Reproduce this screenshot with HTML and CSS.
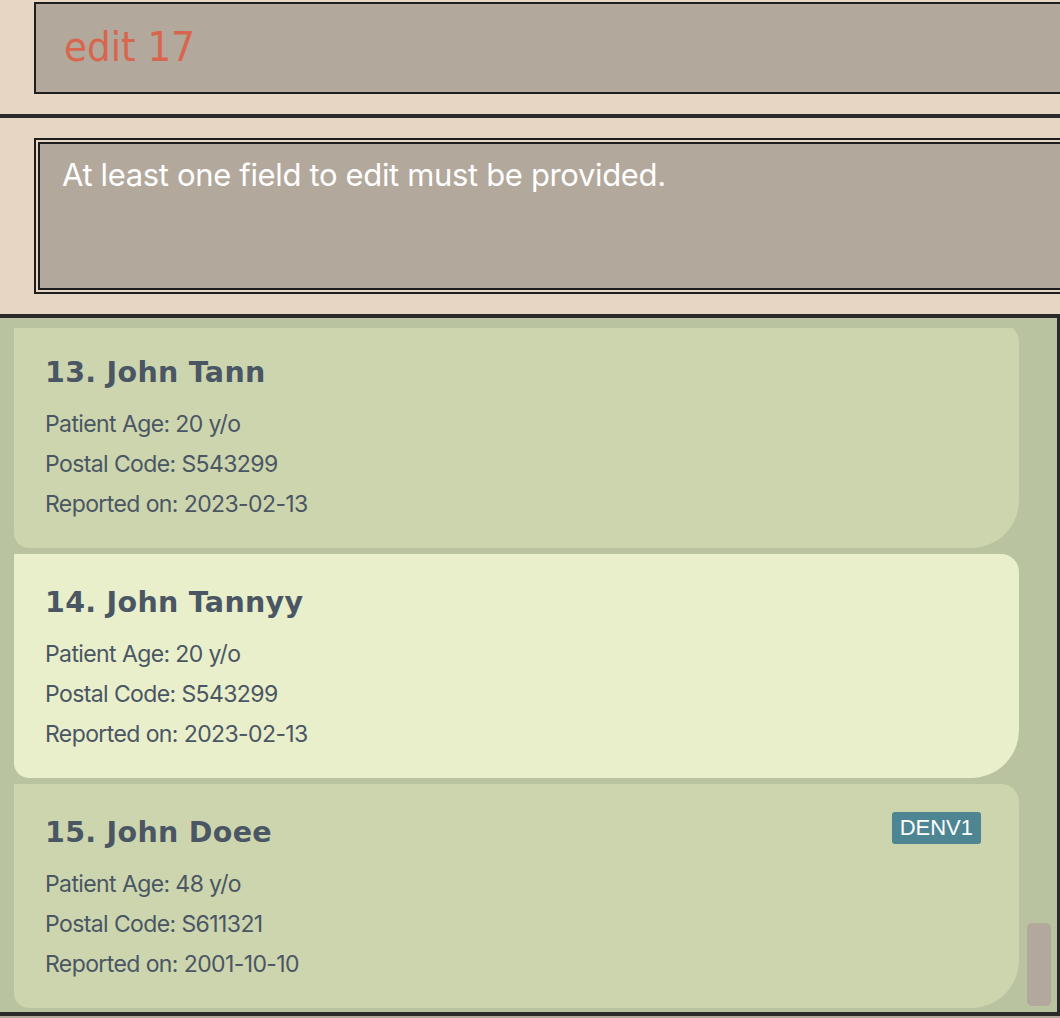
FILE: index.html
```html
<!DOCTYPE html>
<html>
<head>
<meta charset="utf-8">
<link rel="stylesheet" href="styles.css">
</head>
<body>
<div class="app">
  <section class="command-section">
    <div class="command-box">edit 17</div>
  </section>
  <section class="result-section">
    <div class="result-box">At least one field to edit must be provided.</div>
  </section>
  <section class="list-panel">
    <div class="viewport">
      <div class="cards">
        <div class="card">
          <div class="card-head"><span class="name">13. John Tann</span></div>
          <div class="field">Patient Age: 20 y/o</div>
          <div class="field">Postal Code: S543299</div>
          <div class="field">Reported on: 2023-02-13</div>
        </div>
        <div class="card selected">
          <div class="card-head"><span class="name">14. John Tannyy</span></div>
          <div class="field">Patient Age: 20 y/o</div>
          <div class="field">Postal Code: S543299</div>
          <div class="field">Reported on: 2023-02-13</div>
        </div>
        <div class="card">
          <div class="card-head"><span class="name">15. John Doee</span><span class="badge">DENV1</span></div>
          <div class="field">Patient Age: 48 y/o</div>
          <div class="field">Postal Code: S611321</div>
          <div class="field">Reported on: 2001-10-10</div>
        </div>
      </div>
    </div>
    <div class="scroll-track"><div class="scroll-thumb"></div></div>
  </section>
  <footer class="status-bar"></footer>
</div>
</body>
</html>
```

FILE: styles.css
```css
html, body {
  margin: 0;
  padding: 0;
}
body {
  background: #e8d6c5;
  width: 1060px;
  height: 1018px;
  overflow: hidden;
}
.app {
  display: flex;
  flex-direction: column;
  width: 1060px;
}
.command-section {
  padding: 2px 0 20px 34px;
  border-bottom: 4px solid #2a2a2a;
}
.command-box {
  height: 92px;
  margin-right: -20px;
  border: 2px solid #1e1e1e;
  background: #b3a89c;
  color: #d8664f;
  font-family: "DejaVu Sans Condensed", "DejaVu Sans", sans-serif;
  font-size: 41.5px;
  line-height: 48px;
  padding: 19px 0 0 28px;
  box-sizing: border-box;
}
.result-section {
  padding: 20px 0 20px 34px;
}
.result-box {
  height: 156px;
  box-sizing: border-box;
  margin-right: -20px;
  border: 6px double #1e1e1e;
  background: #b3a89c;
  background-clip: padding-box;
  color: #ffffff;
  font-family: Inter, "Noto Sans", sans-serif;
  font-size: 31px;
  line-height: 38px;
  letter-spacing: -0.35px;
  padding: 12px 0 0 22px;
}
.list-panel {
  display: flex;
  background: #bac39f;
  border-top: 4px solid #2a2a2a;
  border-right: 3px solid #2a2a2a;
  border-bottom: 4px solid #2a2a2a;
  padding: 10px 0 4px 14px;
}
.viewport {
  width: 1005px;
  height: 680px;
  overflow: hidden;
}
.cards {
  margin-top: -4px;
  display: flex;
  flex-direction: column;
  gap: 6px;
}
.card {
  height: 224px;
  box-sizing: border-box;
  background: #cdd5ae;
  border-radius: 0 18px 48px 15px;
  padding: 32px 38px 0 31px;
  color: #4a5663;
}
.card.selected {
  background: #e9eecb;
}
.card-head {
  display: flex;
  justify-content: space-between;
  align-items: flex-start;
  height: 34px;
  margin-bottom: 14px;
}
.name {
  font-family: "DejaVu Sans", Verdana, sans-serif;
  font-weight: bold;
  font-size: 28.5px;
  line-height: 34px;
  letter-spacing: 0.3px;
}
.badge {
  margin-top: -4px;
  height: 32px;
  line-height: 32px;
  padding: 0 8px;
  background: #4e8593;
  border-radius: 3px;
  color: #ffffff;
  font-family: "Liberation Sans", Arial, sans-serif;
  font-size: 22px;
}
.field {
  font-family: Inter, "Noto Sans", sans-serif;
  font-size: 23px;
  line-height: 40px;
  letter-spacing: -0.6px;
}
.scroll-track {
  width: 37px;
}
.scroll-thumb {
  margin: 595px 0 0 8px;
  width: 24px;
  height: 83px;
  border-radius: 5px;
  background: #b3a89c;
}
.status-bar {
  height: 40px;
  background: #b3a89c;
}
```
